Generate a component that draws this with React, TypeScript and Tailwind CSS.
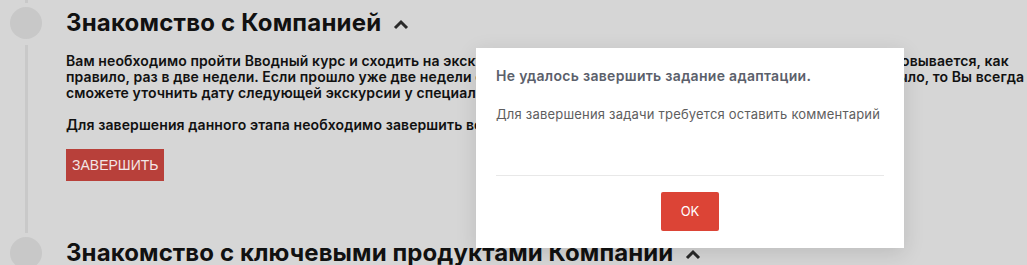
import React from "react"

const font = { fontFamily: "Inter, 'Noto Sans', sans-serif" }

function Caret() {
  return (
    <svg width="16" height="11" viewBox="0 0 16 11" className="ml-[12px] mt-[2px]">
      <polyline points="2,9 8,3 14,9" fill="none" stroke="#2a2a2a" strokeWidth="3" />
    </svg>
  )
}

function Timeline({ last }: { last?: boolean }) {
  return (
    <div className="ml-[10px] mr-[24px] flex w-[32px] shrink-0 flex-col items-center">
      <div className="h-[32px] w-[32px] rounded-full bg-[#c8c8c8]" />
      {!last && <div className="mt-[6px] mb-[4px] w-[3px] flex-1 bg-[#c9c9c9]" />}
    </div>
  )
}

export default function App() {
  return (
    <div className="relative h-[265px] w-[1027px] overflow-hidden bg-[#d6d6d6] text-[#111]" style={font}>
      {/* tail of previous step */}
      <div className="ml-[25px] h-[3px] w-[3px] bg-[#c9c9c9] mb-[4px]" />

      <div className="flex">
        <Timeline />
        <div className="flex-1 pb-[56px]">
          <div className="flex h-[32px] items-center">
            <h2 className="text-[24px] font-bold leading-[32px] tracking-[0.2px]">Знакомство с Компанией</h2>
            <Caret />
          </div>
          <p className="mt-[14px] whitespace-nowrap text-[14px] font-semibold leading-[16px] tracking-[0.1px]">
            Вам необходимо пройти Вводный курс и сходить на экскурсию по офису нашей Компании. Экскурсия у нас организовывается, как
            <br />
            правило, раз в две недели. Если прошло уже две недели с момента Вашего выхода на работу, а экскурсии ещё не было, то Вы всегда
            <br />
            сможете уточнить дату следующей экскурсии у специалиста по адаптации.
          </p>
          <p className="mt-[16px] text-[14px] font-semibold leading-[16px] tracking-[0.1px]">
            Для завершения данного этапа необходимо завершить все задачи и оставить комментарий.
          </p>
          <button
            className="mt-[16px] h-[32px] bg-[#b8403a] px-[6px] text-[14px] uppercase text-[#f3e6e6]"
            style={{ fontFamily: "'Liberation Sans', Arial, sans-serif" }}
          >
            Завершить
          </button>
        </div>
      </div>

      <div className="flex">
        <Timeline last />
        <div className="flex h-[32px] items-center">
          <h2 className="text-[24px] font-bold leading-[32px] tracking-[0.1px]">Знакомство с ключевыми продуктами Компании</h2>
          <Caret />
        </div>
      </div>

      {/* modal */}
      <div className="absolute left-[476px] top-[48px] flex h-[200px] w-[428px] flex-col bg-white px-[20px] pt-[18px] shadow-[0_5px_20px_rgba(0,0,0,0.12)]">
        <div className="whitespace-nowrap text-[14px] font-semibold leading-[20px] tracking-[0.3px] text-[#5b606b]">Не удалось завершить задание адаптации.</div>
        <div className="mt-[19px] whitespace-nowrap text-[13px] leading-[18px] tracking-[0.2px] text-[#5e5e5e]">Для завершения задачи требуется оставить комментарий</div>
        <div className="mt-[52px] h-px bg-[#e8e8e8]" />
        <div className="mt-[16px] flex justify-center">
          <button className="h-[39px] w-[58px] rounded-[2px] bg-[#dc4436] text-[13px] text-white">OK</button>
        </div>
      </div>
    </div>
  )
}
